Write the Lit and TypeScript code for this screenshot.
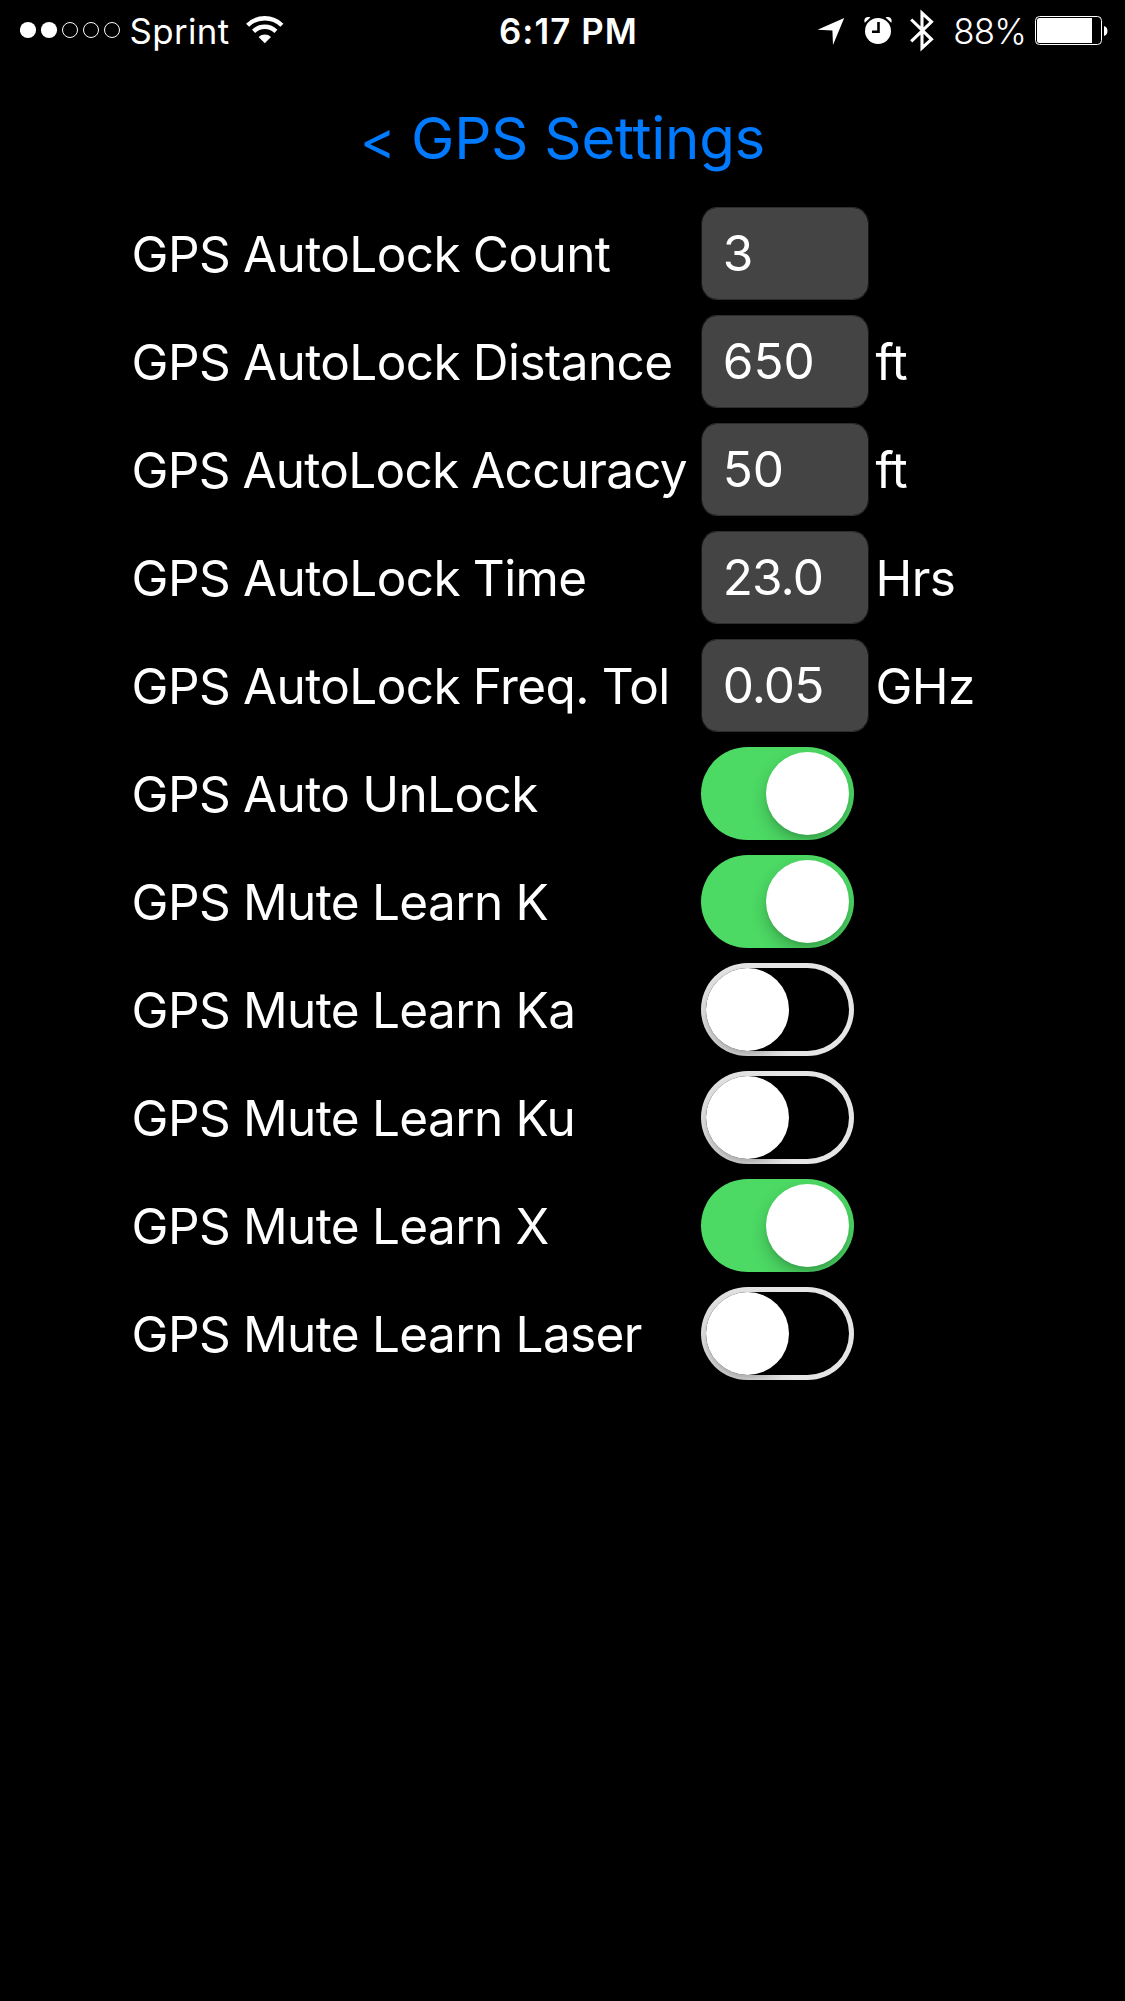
import { LitElement, html, css, svg } from "lit";
import { customElement, property } from "lit/decorators.js";
import { classMap } from "lit/directives/class-map.js";

type Setting = { label: string; tight?: boolean } & (
  | { kind: "field"; value: string; unit?: string }
  | { kind: "switch"; on: boolean }
);

const SETTINGS: Setting[] = [
  { label: "GPS AutoLock Count", kind: "field", value: "3" },
  { label: "GPS AutoLock Distance", kind: "field", value: "650", unit: "ft" },
  { label: "GPS AutoLock Accuracy", tight: true, kind: "field", value: "50", unit: "ft" },
  { label: "GPS AutoLock Time", kind: "field", value: "23.0", unit: "Hrs" },
  { label: "GPS AutoLock Freq. Tol", kind: "field", value: "0.05", unit: "GHz" },
  { label: "GPS Auto UnLock", kind: "switch", on: true },
  { label: "GPS Mute Learn K", kind: "switch", on: true },
  { label: "GPS Mute Learn Ka", kind: "switch", on: false },
  { label: "GPS Mute Learn Ku", kind: "switch", on: false },
  { label: "GPS Mute Learn X", kind: "switch", on: true },
  { label: "GPS Mute Learn Laser", kind: "switch", on: false },
];

@customElement("status-bar")
export class StatusBar extends LitElement {
  static styles = css`
    :host {
      display: grid;
      grid-template-columns: 1fr auto 1fr;
      grid-template-rows: 60px;
      align-items: center;
      height: 60px;
      padding: 0 17px 0 20px;
      box-sizing: border-box;
      font-size: 34.8px;
      line-height: 60px;
      color: #fff;
    }
    svg { display: block; flex: none; }
    .side { display: flex; align-items: center; height: 60px; }
    .right { justify-content: flex-end; }
    .carrier { margin: 2px 0 0 8.5px; letter-spacing: 0.4px; }
    .wifi { margin-left: 16px; }
    .clock { font-weight: 560; letter-spacing: 1.1px; padding-left: 9px; margin-top: 2px; }
    .alarm { margin-left: 19px; }
    .bluetooth { margin-left: 18px; }
    .percent { margin: 2px 9px 0 19px; font-weight: 350; letter-spacing: -0.8px; }
  `;

  render() {
    return html`
      <div class="side">
        <svg class="signal" width="101" height="60" viewBox="0 0 101 60">
          ${[0, 1, 2, 3, 4].map((i) =>
            i < 2
              ? svg`<circle cx=${8 + i * 21} cy="30" r="8.1" fill="#fff" />`
              : svg`<circle cx=${8 + i * 21} cy="30" r="7.5" fill="none" stroke="#fff" stroke-width="1" />`
          )}
        </svg>
        <span class="carrier">Sprint</span>
        <svg class="wifi" width="38" height="60" viewBox="0 0 38 60" fill="none" stroke="#fff">
          <path d="M1.6 25.2a24.5 24.5 0 0 1 34.3 0" stroke-width="4.4" />
          <path d="M7.6 31.3a16 16 0 0 1 22.3 0" stroke-width="4.4" />
          <path d="M18.8 43.2l-6.2-6.3a9 9 0 0 1 12.4 0z" fill="#fff" stroke="none" />
        </svg>
      </div>
      <span class="clock">6:17 PM</span>
      <div class="side right">
        <svg width="28" height="60" viewBox="0 0 28 60">
          <path d="M27.2 18L16 45l-.6-14.6L.6 29.8z" fill="#fff" />
        </svg>
        <svg class="alarm" width="28" height="60" viewBox="0 0 28 60">
          <circle cx="14" cy="31" r="13" fill="#fff" />
          <path d="M.8 22.8C-.8 18.8 2 16 6.4 17.4zM27.2 22.8c1.6-4-1.200-6.800-5.600-5.400z" fill="#fff" />
          <path d="M14.500 22v9.800H8" fill="none" stroke="#000" stroke-width="2.600" />
        </svg>
        <svg class="bluetooth" width="24" height="60" viewBox="0 0 24 60">
          <path d="M1.200 19.500l20.300 19.800-9.500 8.700V13l9.500 8.800L1.200 41.300" fill="none" stroke="#fff" stroke-width="3.100" />
        </svg>
        <span class="percent">88%</span>
        <svg width="73" height="60" viewBox="0 0 73 60">
          <rect x=".5" y="16.500" width="66" height="28" rx="4" fill="none" stroke="#fff" />
          <path d="M4.500 18H57v25H4.500A2.500 2.500 0 0 1 2 40.500v-20A2.500 2.500 0 0 1 4.500 18z" fill="#fff" />
          <path d="M69 26c4.600 1 4.600 9 0 10z" fill="#fff" />
        </svg>
      </div>
    `;
  }
}

@customElement("toggle-switch")
export class ToggleSwitch extends LitElement {
  @property({ type: Boolean }) on = false;

  static styles = css`
    :host { display: block; width: 153px; height: 93px; }
    .track {
      display: flex;
      box-sizing: border-box;
      width: 153px;
      height: 93px;
      padding: 5px;
      border-radius: 46.5px;
      overflow: hidden;
      box-shadow: inset 0 0 0 5px #e5e5e5;
    }
    .track.on { justify-content: flex-end; background: #4cd964; box-shadow: none; }
    .knob {
      width: 83px;
      height: 83px;
      border-radius: 50%;
      background: #fff;
      box-shadow: 0 8px 16px rgba(0, 0, 0, 0.22), 0 3px 3px rgba(0, 0, 0, 0.06);
    }
  `;

  render() {
    return html`<div class=${classMap({ track: true, on: this.on })}><div class="knob"></div></div>`;
  }
}

@customElement("app-root")
export class AppRoot extends LitElement {
  static styles = css`
    :host {
      display: block;
      min-height: 2001px;
      background: #000;
      color: #fff;
      font-family: Inter, "Liberation Sans", sans-serif;
      font-kerning: normal;
    }
    .title {
      height: 147px;
      line-height: 156px;
      text-align: center;
      font-size: 58.2px;
      letter-spacing: -0.25px;
      color: #007aff;
      white-space: pre;
    }
    .chevron {
      font-size: 54px;
      line-height: 0;
      vertical-align: -0.5px;
      margin-right: -0.5px;
    }
    .list { display: grid; gap: 15px; padding-left: 131px; }
    .row {
      display: grid;
      grid-template-columns: 570px auto 1fr;
      height: 93px;
      font-size: 49.5px;
      line-height: 95px;
      white-space: nowrap;
    }
    .label { padding-left: 0.6px; letter-spacing: -0.6px; word-spacing: -0.5px; }
    .label.tight { letter-spacing: -0.73px; }
    .field {
      box-sizing: border-box;
      width: 168px;
      height: 93px;
      padding-left: 20.7px;
      border: 1px solid;
      border-color: #2d2d2d #171717;
      border-radius: 16px;
      background: #444;
      background-clip: padding-box;
      line-height: 91px;
    }
    .decimal { letter-spacing: -0.9px; }
    .unit { padding-left: 6.5px; letter-spacing: -0.6px; }
  `;

  render() {
    return html`
      <status-bar></status-bar>
      <div class="title"><span class="chevron">&lt;</span> GPS Settings</div>
      <div class="list">
        ${SETTINGS.map(
          (s) => html`
            <div class="row">
              <span class=${classMap({ label: true, tight: !!s.tight })}>${s.label}</span>
              ${s.kind === "field"
                ? html`<div class=${classMap({ field: true, decimal: s.value.includes(".") })}>${s.value}</div>
                    <span class="unit">${s.unit ?? ""}</span>`
                : html`<toggle-switch ?on=${s.on}></toggle-switch>`}
            </div>
          `
        )}
      </div>
    `;
  }
}
